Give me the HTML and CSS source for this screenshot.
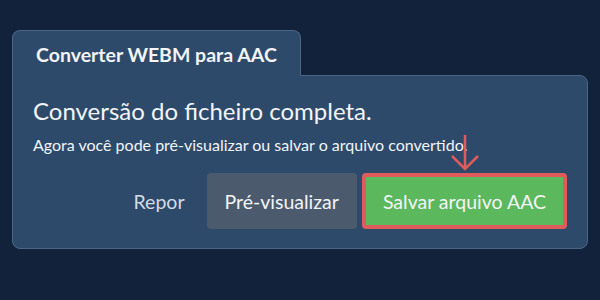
FILE: index.html
```html
<!DOCTYPE html>
<html lang="pt">
<head>
  <meta charset="UTF-8">
  <title>Converter WEBM para AAC</title>
  <link rel="stylesheet" href="styles.css">
</head>
<body>
  <div class="converter">
    <div class="tab">Converter WEBM para AAC</div>
    <div class="panel">
      <h2 class="title">Conversão do ficheiro completa.</h2>
      <p class="note">Agora você pode pré-visualizar ou salvar o arquivo convertido.</p>
      <div class="actions">
        <button class="reset">Repor</button>
        <button class="preview">Pré-visualizar</button>
        <div class="save-wrap">
          <svg class="hint-arrow" width="28" height="36" viewBox="0 0 28 36">
            <path d="M14 0 V34 M1 21 L14 34 L27 21" fill="none" stroke="#e05b5b" stroke-width="2.5"/>
          </svg>
          <button class="save">Salvar arquivo AAC</button>
        </div>
      </div>
    </div>
  </div>
</body>
</html>
```

FILE: styles.css
```css
body {
  margin: 0;
  background: #11223a;
  font-family: Lato, 'Noto Sans', sans-serif;
  color: #f2f4f7;
}
.converter {
  padding: 30px 12px 0 12px;
}
.tab {
  display: inline-block;
  width: 289px;
  height: 46px;
  box-sizing: border-box;
  padding: 12px 0 0 23px;
  background: #2d4a6b;
  border: 1px solid #4a6586;
  border-bottom: none;
  border-radius: 8px 8px 0 0;
  font-size: 19.5px;
  font-weight: bold;
  position: relative;
  z-index: 1;
  margin-bottom: -1px;
}
.panel {
  background: #2d4a6b;
  border: 1px solid #4a6586;
  border-radius: 0 8px 8px 8px;
  height: 174px;
  box-sizing: border-box;
  padding: 20px 20px 0 20px;
}
.title {
  margin: 0;
  font-size: 24px;
  font-weight: normal;
}
.note {
  margin: 10px 0 0 0;
  font-size: 16px;
}
.actions {
  display: flex;
  justify-content: flex-end;
  align-items: center;
  margin-top: 19px;
}
button {
  font-family: Lato, 'Noto Sans', sans-serif;
  font-size: 19.5px;
  border: none;
  cursor: pointer;
  color: #f2f4f7;
}
.reset {
  background: none;
  color: #d4dbe3;
  padding: 0 22px 0 0;
}
.preview {
  background: #4b5b6d;
  height: 56px;
  padding: 0 18px;
  border-radius: 4px;
  margin-right: 5px;
}
.save-wrap {
  position: relative;
}
.hint-arrow {
  position: absolute;
  left: 89px;
  top: -38px;
}
.save {
  background: #5cb85c;
  height: 56px;
  padding: 0 17px;
  border: 4px solid #e05b5b;
  border-radius: 4px;
  display: block;
}
```
